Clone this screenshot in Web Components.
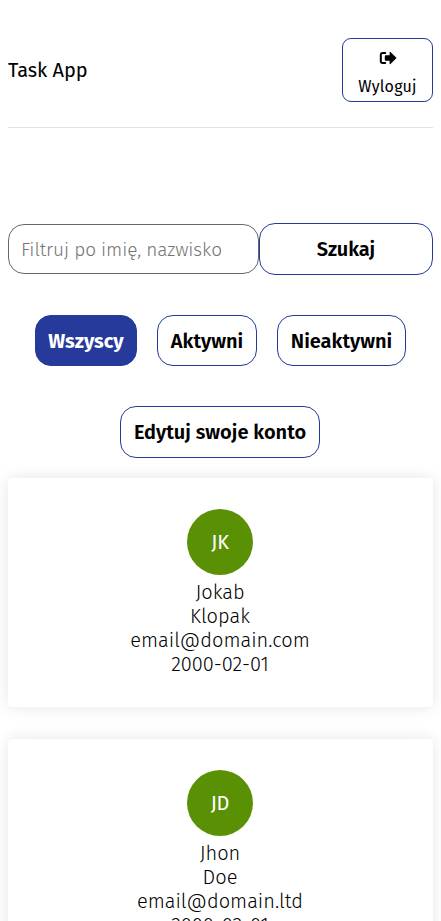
<!DOCTYPE html>
<html lang="pl">
<head>
<meta charset="utf-8">
<title>Task App</title>
<style>
html{height:921px;overflow:hidden}
body{margin:0;background:#fff;color:#000;font-family:"Fira Sans","Open Sans","Noto Sans",sans-serif;height:921px;overflow:hidden}
</style>
</head>
<body>
<task-app></task-app>
<script>
const define = (name, html) => customElements.define(name, class extends HTMLElement {
  connectedCallback() {
    if (this.shadowRoot) return;
    const root = this.attachShadow({mode: 'open'});
    const t = document.createElement('template');
    t.innerHTML = html;
    root.append(t.content.cloneNode(true));
  }
});

define('app-button', `<style>
:host{display:flex;align-items:center;justify-content:center;box-sizing:border-box;height:52px;border:1px solid #243a9c;border-radius:16px;background:#fff;color:#000;font-size:20px;font-weight:600;line-height:24px;white-space:nowrap;cursor:pointer}
:host([small]){height:51px;padding-top:1px}
:host([active]){background:#253a9b;color:#fff;font-weight:700}
</style><slot></slot>`);

define('app-header', `<style>
:host{display:flex;justify-content:space-between;align-items:center;box-sizing:border-box;height:128px;padding:12px 0 0;border-bottom:1px solid #e3e3e3}
.title{font-size:20px;line-height:24px;letter-spacing:-.08px}
button{display:flex;flex-direction:column;align-items:center;box-sizing:border-box;width:91px;height:64px;margin:0;padding:12px 0 0;border:1px solid #243a9c;border-radius:9px;background:#fff;color:#000;font:16px/20px "Fira Sans","Open Sans","Noto Sans",sans-serif;letter-spacing:.2px}
svg{display:block;width:18px;height:14px;margin-bottom:12px}
</style>
<div class="title">Task App</div>
<button><svg viewBox="0 0 18 14"><path d="M6.2 2H3.7Q1.8 2 1.8 4v6q0 2 1.9 2h2.5" fill="none" stroke="#000" stroke-width="2" stroke-linecap="round"/><path d="M10.6 1.5q0-1.2.9-.4l5.6 5.3q.6.6 0 1.2l-5.6 5.3q-.9.8-.9-.4V9.7H6.7q-.9 0-.9-.9V5.2q0-.9.9-.9h3.9z"/></svg>Wyloguj</button>`);

define('search-bar', `<style>
:host{display:flex;align-items:center;margin-top:95px}
.field{display:flex;align-items:center;box-sizing:border-box;width:251px;height:50px;padding:1px 0 0 12px;border:1px solid #686868;border-radius:16px;color:#757575;font-size:19px;font-weight:300;line-height:24px;letter-spacing:-.1px;white-space:nowrap}
app-button{flex:1}
</style>
<div class="field">Filtruj po imię, nazwisko</div>
<app-button>Szukaj</app-button>`);

define('filter-tabs', `<style>
:host{display:flex;justify-content:center;gap:20px;margin-top:40px}
</style>
<app-button small active style="width:102px">Wszyscy</app-button>
<app-button small style="width:100px">Aktywni</app-button>
<app-button small style="width:129px">Nieaktywni</app-button>`);

define('user-card', `<style>
:host{display:flex;flex-direction:column;align-items:center;box-sizing:border-box;height:229px;padding:31px 1px 0 0;border-radius:4px;background:#fff;box-shadow:0 0 15px rgba(0,0,0,.1);font-size:20px;font-weight:300;line-height:24px}
.avatar{display:flex;align-items:center;justify-content:center;width:66px;height:66px;margin-bottom:5px;border-radius:50%;background:#5a9104;color:#fff;font-weight:400;letter-spacing:-.3px}
</style>
<div class="avatar"><slot name="initials"></slot></div>
<slot></slot>`);

define('task-app', `<style>
:host{display:block;padding:0 8px}
.edit{width:200px;margin:40px 113px 20px 112px}
user-card + user-card{margin-top:32px}
</style>
<app-header></app-header>
<search-bar></search-bar>
<filter-tabs></filter-tabs>
<app-button class="edit">Edytuj swoje konto</app-button>
<user-card>
<span slot="initials">JK</span>
<div>Jokab</div>
<div>Klopak</div>
<div>email@domain.com</div>
<div>2000-02-01</div>
</user-card>
<user-card>
<span slot="initials">JD</span>
<div>Jhon</div>
<div>Doe</div>
<div>email@domain.ltd</div>
<div>2000-02-01</div>
</user-card>`);
</script>
</body>
</html>
